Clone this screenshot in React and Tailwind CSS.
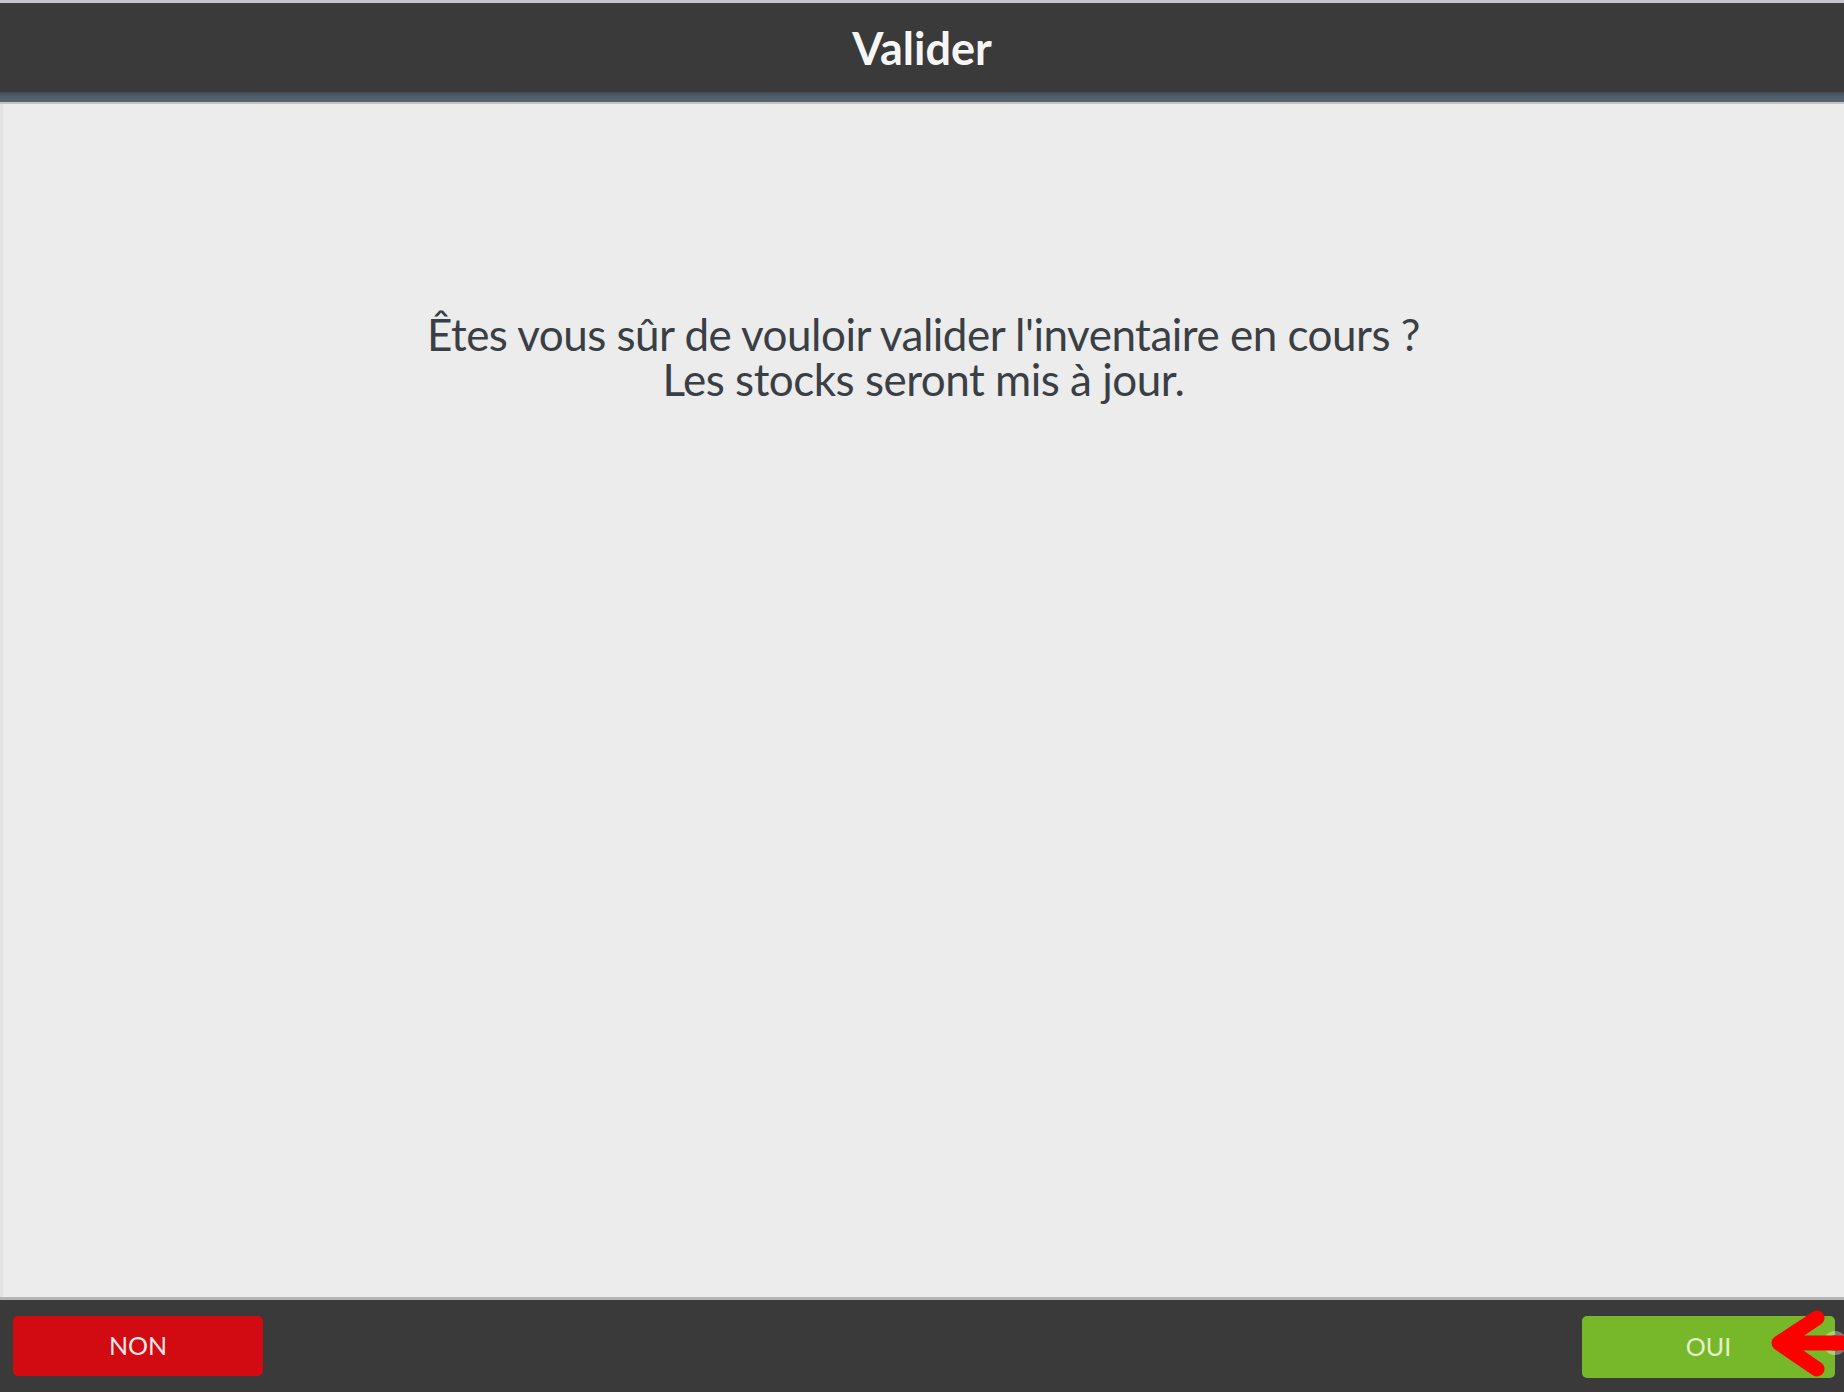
import React from "react";

export default function App() {
  return (
    <div className="relative flex h-[1392px] w-[1844px] flex-col overflow-hidden bg-[#ececec]">
      {/* header */}
      <div className="flex flex-col">
        <div className="h-[3px] bg-[#c7c5cb]" />
        <div className="flex h-[89px] items-center justify-center bg-[#3a3a3a]">
          <span className="mt-[2px] font-['Lato',sans-serif] text-[45px] font-bold leading-none text-[#f6f6f6]">
            Valider
          </span>
        </div>
        <div className="h-[10px] bg-gradient-to-b from-[#3f4a54] via-[#50606d] to-[#56636f]" />
        <div className="h-[2px] bg-[#c4c4c4]" />
      </div>

      {/* body */}
      <div className="flex flex-1 flex-col items-center border-l-[3px] border-[#e2e2e2] bg-[#ececec]">
        <div className="mt-[208px] text-center font-['Lato',sans-serif] text-[44px] leading-[45px] tracking-[-0.5px] text-[#3a3f45]">
          <p>Êtes vous sûr de vouloir valider l'inventaire en cours ?</p>
          <p>Les stocks seront mis à jour.</p>
        </div>
      </div>

      {/* footer */}
      <div className="flex flex-col">
        <div className="h-[3px] bg-[#b4b4b4]" />
        <div className="flex h-[92px] items-start justify-between bg-[#3a3a3a] pl-[13px] pr-[9px] pt-[16px]">
          <button className="flex h-[60px] w-[250px] items-center justify-center rounded-[5px] bg-[#d20b12] font-['Lato',sans-serif] text-[25px] text-[#f4e8e8]">
            NON
          </button>
          <button className="flex h-[62px] w-[253px] items-center justify-center rounded-[5px] bg-[#77b82a] font-['Lato',sans-serif] text-[25px] text-[#e3f1cc]">
            OUI
          </button>
        </div>
      </div>

      {/* annotation arrow */}
      <svg
        className="absolute left-[1764px] top-[1306px]"
        width="80"
        height="76"
        viewBox="0 0 80 76"
      >
        <circle cx="71" cy="37" r="12" fill="#ffffff" opacity="0.35" />
        <circle cx="71" cy="37" r="8" fill="#1f9f55" />
        <path
          d="M53 12 L15 37 L53 63 M15 37 L82 37"
          fill="none"
          stroke="#ff0000"
          strokeWidth="15"
          strokeLinecap="round"
          strokeLinejoin="round"
        />
      </svg>
    </div>
  );
}
